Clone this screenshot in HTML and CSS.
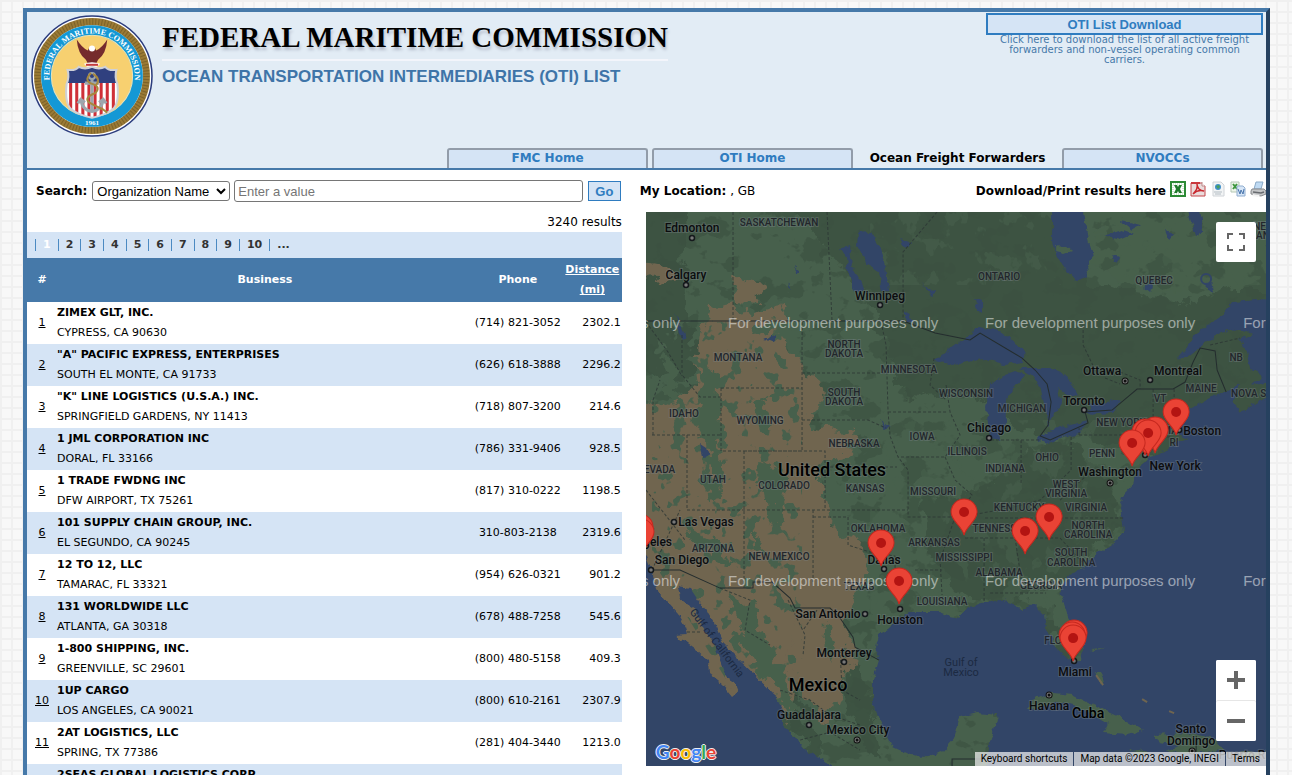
FILE: index.html
```html
<!DOCTYPE html>
<html lang="en">
<head>
    <meta charset="UTF-8">
    <meta name="viewport" content="width=device-width, initial-scale=1.0">
    <title>FMC - Ocean Transportation Intermediaries List</title>
    <link rel="stylesheet" href="styles.css">
</head>
<body>
    <div class="page">
        <header class="header">
            <div class="banner">
                <svg class="seal" viewBox="0 0 120 120" role="img" aria-label="Federal Maritime Commission seal">
                    <defs>
                        <path id="sealArc" d="M20 73 A42 42 0 1 1 100 73"/>
                        <clipPath id="shieldClip"><path d="M36 54 q8 1 11-3 q6 3 13 0 q7 3 13 0 q3 4 11 3 q-2 7 1 14 q2 20-5 25 q-8 6-20 8 q-12-2-20-8 q-7-5-5-25 q3-7 1-14z"/></clipPath>
                    </defs>
                    <circle cx="60" cy="60" r="59" fill="#fff" stroke="#2b3c7d" stroke-width="1.500"/>
                    <circle cx="60" cy="60" r="53.500" fill="none" stroke="#9a7a35" stroke-width="7"/>
                    <circle cx="60" cy="60" r="53.500" fill="none" stroke="#7d6229" stroke-width="6" stroke-dasharray="1 2"/>
                    <circle cx="60" cy="60" r="50" fill="#1498d5"/>
                    <circle cx="60" cy="60" r="40" fill="#f7d070" stroke="#e9e2b8"/>
                    <text class="seal-text ring"><textPath href="#sealArc" startOffset="50%" text-anchor="middle">FEDERAL MARITIME COMMISSION</textPath></text>
                    <text class="seal-text" x="60" y="108" text-anchor="middle">1961</text>
                    <path d="M45 24 q1 14 9 20 l2 4 h8 l2-4 q8-6 9-20 q-5 8-11 11 q-1-4-4-4 t-4 4 q-6-3-11-11z" fill="#752b2d"/>
                    <circle cx="60" cy="33" r="3" fill="#fff"/>
                    <path d="M52 48 q8-3 16 0 l-3 3 h-10z" fill="#fff"/>
                    <path d="M54 49h12" stroke="#c43c3c" stroke-width="2"/>
                    <g clip-path="url(#shieldClip)">
                        <path d="M34 50h52v54H34z" fill="#fff"/>
                        <path d="M39 67v36M45 67v36M51 67v36M57 67v36M63 67v36M69 67v36M75 67v36M81 67v36" stroke="#cf3038" stroke-width="3"/>
                        <path d="M34 50h52v17H34z" fill="#30407f"/>
                    </g>
                    <path d="M36 54 q8 1 11-3 q6 3 13 0 q7 3 13 0 q3 4 11 3 q-2 7 1 14 q2 20-5 25 q-8 6-20 8 q-12-2-20-8 q-7-5-5-25 q3-7 1-14z" fill="none" stroke="#cfd1d8" stroke-width="2"/>
                    <g fill="none" stroke="#9da6ad" stroke-width="3">
                        <circle cx="60" cy="60" r="3" stroke-width="2"/>
                        <path d="M60 63v31M53 67h14M49 84q2 10 11 11q9-1 11-11M46 87l3-4 4 3M67 86l4-3 3 4"/>
                    </g>
                    <path d="M59 57q-8 8 2 11q8 3 2 9q-11 4-6 9q7 4 14 7l4 3M61 58q8 5 3 11" fill="none" stroke="#a7883e" stroke-width="2"/>
                </svg>
                <div class="titles">
                    <h1>FEDERAL MARITIME COMMISSION</h1>
                    <h2>OCEAN TRANSPORTATION INTERMEDIARIES (OTI) LIST</h2>
                </div>
                <div class="download">
                    <button type="button" class="download-btn">OTI List Download</button>
                    <p>Click here to download the list of all active freight forwarders and non-vessel operating common carriers.</p>
                </div>
            </div>
            <nav class="tabs">
                <a href="#">FMC Home</a>
                <a href="#">OTI Home</a>
                <a href="#" class="active">Ocean Freight Forwarders</a>
                <a href="#">NVOCCs</a>
            </nav>
        </header>

        <main class="main">
            <section class="listing">
                <form class="search">
                    <label for="field">Search:</label>
                    <select id="field">
                        <option>Organization Name</option>
                        <option>City</option>
                        <option>State</option>
                    </select>
                    <input type="text" id="value" placeholder="Enter a value" aria-label="Enter a value">
                    <button type="button" class="go">Go</button>
                </form>
                <div class="count">3240 results</div>
                <nav class="pager">
                    <a href="#" class="current">1</a><a href="#">2</a><a href="#">3</a><a href="#">4</a><a href="#">5</a><a href="#">6</a><a href="#">7</a><a href="#">8</a><a href="#">9</a><a href="#">10</a><a href="#">...</a>
                </nav>
                <table class="results">
                    <thead>
                        <tr>
                            <th class="num">#</th>
                            <th>Business</th>
                            <th class="phone">Phone</th>
                            <th class="dist"><a href="#">Distance (mi)</a></th>
                        </tr>
                    </thead>
                    <tbody>
                        <tr><td class="num"><a href="#">1</a></td><td><b>ZIMEX GLT, INC.</b><br>CYPRESS, CA 90630</td><td class="phone">(714) 821-3052</td><td class="dist">2302.1</td></tr>
                        <tr><td class="num"><a href="#">2</a></td><td><b>"A" PACIFIC EXPRESS, ENTERPRISES</b><br>SOUTH EL MONTE, CA 91733</td><td class="phone">(626) 618-3888</td><td class="dist">2296.2</td></tr>
                        <tr><td class="num"><a href="#">3</a></td><td><b>"K" LINE LOGISTICS (U.S.A.) INC.</b><br>SPRINGFIELD GARDENS, NY 11413</td><td class="phone">(718) 807-3200</td><td class="dist">214.6</td></tr>
                        <tr><td class="num"><a href="#">4</a></td><td><b>1 JML CORPORATION INC</b><br>DORAL, FL 33166</td><td class="phone">(786) 331-9406</td><td class="dist">928.5</td></tr>
                        <tr><td class="num"><a href="#">5</a></td><td><b>1 TRADE FWDNG INC</b><br>DFW AIRPORT, TX 75261</td><td class="phone">(817) 310-0222</td><td class="dist">1198.5</td></tr>
                        <tr><td class="num"><a href="#">6</a></td><td><b>101 SUPPLY CHAIN GROUP, INC.</b><br>EL SEGUNDO, CA 90245</td><td class="phone">310-803-2138</td><td class="dist">2319.6</td></tr>
                        <tr><td class="num"><a href="#">7</a></td><td><b>12 TO 12, LLC</b><br>TAMARAC, FL 33321</td><td class="phone">(954) 626-0321</td><td class="dist">901.2</td></tr>
                        <tr><td class="num"><a href="#">8</a></td><td><b>131 WORLDWIDE LLC</b><br>ATLANTA, GA 30318</td><td class="phone">(678) 488-7258</td><td class="dist">545.6</td></tr>
                        <tr><td class="num"><a href="#">9</a></td><td><b>1-800 SHIPPING, INC.</b><br>GREENVILLE, SC 29601</td><td class="phone">(800) 480-5158</td><td class="dist">409.3</td></tr>
                        <tr><td class="num"><a href="#">10</a></td><td><b>1UP CARGO</b><br>LOS ANGELES, CA 90021</td><td class="phone">(800) 610-2161</td><td class="dist">2307.9</td></tr>
                        <tr><td class="num"><a href="#">11</a></td><td><b>2AT LOGISTICS, LLC</b><br>SPRING, TX 77386</td><td class="phone">(281) 404-3440</td><td class="dist">1213.0</td></tr>
                        <tr><td class="num"></td><td><b>2SEAS GLOBAL LOGISTICS CORP</b></td><td class="phone"></td><td class="dist"></td></tr>
                    </tbody>
                </table>
            </section>

            <section class="location">
                <div class="location-bar">
                    <div><b>My Location:</b> , GB</div>
                    <div class="exports">
                        <b>Download/Print results here</b>
                        <a href="#" aria-label="Excel"><svg viewBox="0 0 16 16"><path d="M1 1h14v14H1z" fill="#fff" stroke="#2c8a35" stroke-width="2"/><path d="M3 3h10v10H3z" fill="none" stroke="#a8d4a9" stroke-dasharray="1 1"/><path d="M4 4h3l1 2 1-2h3l-2 4 2 4H9l-1-2-1 2H4l2-4z" fill="#1f7a2b"/></svg></a>
                        <a href="#" aria-label="PDF"><svg viewBox="0 0 16 16"><path d="M1 2h11l3 3v10H1z" fill="#eadcdc" stroke="#c4474b"/><path d="M1 1h9v2H1z" fill="#c9383d"/><path d="M3 13c3-3 5-7 4-10 0 4 3 7 7 7-4-1-8 0-11 3z" fill="none" stroke="#c9282e" stroke-width="1.500"/><path d="M12 1v4h3" fill="#fff" stroke="#b88"/></svg></a>
                        <a href="#" aria-label="HTML"><svg viewBox="0 0 16 16"><path d="M3 1h8l3 3v11H3z" fill="#f2f4f5" stroke="#d0d4d8"/><circle cx="8" cy="6" r="3" fill="#3f8fc9"/><path d="M6 5l3-1 1 2-2 2z" fill="#4aa05a"/><path d="M4 11h8M5 13h6" stroke="#b3bcc3"/></svg></a>
                        <a href="#" aria-label="Word"><svg viewBox="0 0 16 16"><path d="M1 1h8v10H1z" fill="#eef6ea" stroke="#b4c7b6"/><path d="M3 3l4 5M7 3L3 8" stroke="#3d963e" stroke-width="2"/><path d="M7 5h6l2 2v8H7z" fill="#d7e6f7" stroke="#91aed0"/><path d="M8 8l2 5 1-4 2 4 1-5" fill="none" stroke="#4774ab"/></svg></a>
                        <a href="#" aria-label="Print"><svg viewBox="0 0 16 16"><path d="M6 1h7l-2 7H4z" fill="#bfdaf3" stroke="#8aaac8"/><path d="M2 8h12l2 2v3l-5 2-10-2v-3z" fill="#c3c5c7" stroke="#87898c"/><path d="M3 11l8 1 3-1" fill="none" stroke="#686b70" stroke-width="1.500"/><path d="M3 13l7 1-2 2-6-1z" fill="#f4f4f4"/></svg></a>
                    </div>
                </div>

                <div class="map">
                    <svg class="map-canvas" viewBox="646 212 620 554" preserveAspectRatio="xMidYMid slice" role="img" aria-label="Map of results">
                        <defs>
                            <filter id="rough" x="-5%" y="-5%" width="110%" height="110%">
                                <feTurbulence type="fractalNoise" baseFrequency="0.06" numOctaves="4" seed="4" result="n"/>
                                <feDisplacementMap in="SourceGraphic" in2="n" scale="26" xChannelSelector="R" yChannelSelector="G"/>
                            </filter>
                            <filter id="coast" x="-5%" y="-5%" width="110%" height="110%" color-interpolation-filters="sRGB">
                                <feTurbulence type="fractalNoise" baseFrequency="0.12" numOctaves="3" seed="9" result="n"/>
                                <feDisplacementMap in="SourceGraphic" in2="n" scale="7" xChannelSelector="R" yChannelSelector="G"/>
                            </filter>
                            <filter id="woods" x="0" y="0" width="100%" height="100%" color-interpolation-filters="sRGB">
                                <feTurbulence type="fractalNoise" baseFrequency="0.04 0.05" numOctaves="4" seed="12"/>
                                <feColorMatrix values="0 0 0 0 0.235  0 0 0 0 0.318  0 0 0 0 0.255  22 0 0 0 -12.4"/>
                                <feComposite in2="SourceGraphic" operator="in"/>
                            </filter>
                            <filter id="meadow" x="0" y="0" width="100%" height="100%" color-interpolation-filters="sRGB">
                                <feTurbulence type="fractalNoise" baseFrequency="0.05 0.04" numOctaves="4" seed="31"/>
                                <feColorMatrix values="0 0 0 0 0.278  0 0 0 0 0.376  0 0 0 0 0.298  0 22 0 0 -12.8"/>
                                <feComposite in2="SourceGraphic" operator="in"/>
                            </filter>
                            <filter id="steppe" x="0" y="0" width="100%" height="100%" color-interpolation-filters="sRGB">
                                <feTurbulence type="fractalNoise" baseFrequency="0.07" numOctaves="3" seed="22"/>
                                <feColorMatrix values="0 0 0 0 0.278  0 0 0 0 0.376  0 0 0 0 0.298  22 0 0 0 -13.2"/>
                                <feComposite in2="SourceGraphic" operator="in"/>
                            </filter>
                            <g id="pin">
                                <path d="M0 0C-2-9-13-14-13-23a13 13 0 1 1 26 0C13-14 2-9 0 0z" fill="#ea4335" stroke="#c5281f"/>
                                <circle cy="-23" r="5" fill="#b31412"/>
                            </g>
                            <circle id="dot" r="2.500" fill="#777" stroke="#15191c" stroke-width="1.500"/>
                            <g id="capital"><circle r="3" fill="#777" stroke="#111"/><circle r="1.500" fill="#111"/></g>
                        </defs>

                        <!-- land -->
                        <path d="M640 200h640v580H640z" fill="#47604c"/>
                        <g filter="url(#rough)" fill="#3d5342">
                            <path d="M630 190h55l4 40-6 30 8 50 10 40-14 32-22-8-35 6z"/>
                            <path d="M780 190h290l-10 60 40 40 90 10 80-20v130l-100 50-70-20-80-10-50-40-66 10-15-40-20-60-60-70z"/>
                            <path d="M920 500l60-10 50-40 50-5 30 30 10 50-50 50-60 30-50-10-30-40z"/>
                            <path d="M725 600l30 30 40 60 30 60-12 16-60-110-40-50zM850 655l20 40 8 60-20-10-14-50zM1050 605l20 45-5 12-24-40z"/>
                        </g>
                        <path d="M1098 205h172v85h-90l-60-6-20-20z" fill="#47604c" filter="url(#rough)"/>
                        <path d="M640 200h640v580H640z" fill="#000" filter="url(#woods)" opacity=".65"/>
                        <path d="M870 420h300v200H870zM870 205h400v80H870z" fill="#000" filter="url(#meadow)" opacity=".6"/>

                        <!-- dry areas -->
                        <g filter="url(#rough)" fill="#6f6550">
                            <path d="M733 275l32 8-5 20-24-2zM700 335l12-28 20-4 15 12 36-8 5 12-28 4-8 12 32-2 8 20 18 20 22 16-15 18-5 20 40 4 14 15-30 8-17 12v26l10 32 28 18 12 32-16 30-18 26-20 10-4 30-30 50-14 10-60-50-18-16-22-25-20-20-22-6-12-40V365l12 20 40 25 20-12 12-10-2-25z"/>
                            <path d="M640 260l20 2 12 18-15 4z"/>
                            <path d="M800 605l40 12 16 40-14 30-12 36-28-26-15-38z"/>
                            <path d="M675 580l10 30 30 45 18 30-14-2-45-55-24-46z"/>
                        </g>
                        <path d="M652 320h150v385h-60L652 560z" fill="#000" filter="url(#steppe)"/>
                        <g filter="url(#rough)" fill="#47604c">
                            <path d="M708 370l14 16-4 58 4 50-10 8-6-60-14-24z"/>
                            <path d="M756 460l18 4 14 20-6 40-14-8-6-30z"/>
                            <path d="M690 532l30 8 20 24-14-2-34-16zM752 530l10 8-2 22-8-10z"/>
                            <path d="M728 590l24 16 18 40 20 40 6 32-24-32-30-40zM822 626l14 18-6 20-10-16z"/>
                            <path d="M752 402l14-4 10 30-8 6zM660 350l16 20 6 40-12-16z"/>
                        </g>

                        <!-- oceans and lakes -->
                        <g filter="url(#coast)" fill="#324567">
                            <path d="M630 540L646 556 652 570 657 590 667 602 677 613 685 627 687 634 676 635 695 649 708 661 709 674 723 685 733 697 739 692 735 682 727 677 722 663 715 647 703 627 695 610 680 600 678 586 690 588 698 600 707 610 715 623 723 643 740 660 753 672 773 693 783 710 783 727 797 740 807 752 823 760 840 772H630z"/>
                            <path d="M983 780L988 747 993 733 998 715 977 713 960 717 954 738 942 752 927 756 910 755 893 747 888 737 878 720 873 703 873 680 879 660 875 647 878 635 887 630 900 617 913 612 940 612 950 616 960 618 968 607 987 603 1000 600 1010 603 1022 610 1035 605 1045 615 1047 630 1055 647 1070 661 1080 660 1083 650 1077 633 1068 617 1060 593 1068 575 1083 567 1100 552 1117 540 1124 532 1122 517 1119 506 1124 495 1133 485 1137 470 1147 458 1165 452 1174 443 1188 438 1178 434 1180 422 1188 410 1213 396 1227 392 1240 384 1233 402 1242 412 1267 397 1290 400V780z"/>
                            <path d="M1178 358L1200 330 1222 315 1233 302 1280 298V380L1250 386 1262 376 1250 368 1246 352 1240 340 1252 334 1238 328 1222 333 1205 342 1185 358z"/>
                            <path d="M1052 200V242L1056 256 1068 272 1076 281 1088 276 1087 266 1093 258 1088 235 1082 200z"/>
                            <path d="M934 361L948 350 966 337 980 327 1004 332 1014 344 1025 352 1023 361 1004 364 984 359 968 362 954 365z"/>
                            <path d="M990 384L1002 376 1016 371 1026 375 1014 388 1007 400 1005 424 1000 440 990 438 986 408z"/>
                            <path d="M1021 368L1050 368 1067 376 1079 397 1068 394 1057 388 1062 402 1055 415 1048 426 1045 410 1041 390 1034 377z"/>
                            <path d="M1037 438L1060 427 1089 421 1078 433 1062 438 1048 444zM1083 414L1094 404 1119 400 1114 412z"/>
                            <path d="M858 233L870 232 879 247 886 267 889 290 882 291 878 272 868 266 857 246zM840 248l10-2 2 22 12 20-8 4-8-20-2-14z"/>
                            <path d="M700 443l6 4 3 8-6 1z"/>
                            <path d="M1104 236l18-6 12 4-14 6zM1188 212l12-2 4 22-8 4zM974 299l8 2v14l-6-4zM904 310l12 14-10-2zM1144 287l10-9-4 14zM1120 221l20 4-8 5zM1112 255l8 2-4 5zM1204 285l7-3 2 12zM1165 231l9 3-5 6z"/>
                            <path d="M794 267l5 4-4 3zM788 282l3 8-4-4zM765 340l11-5-2 7zM922 284l15 9-4 3zM900 239l12 4-6 5zM675 313l12 26-5 0zM880 420l9 7-4 2z"/>
                        </g>
                        <circle cx="1206" cy="279" r="5" fill="none" stroke="#324567" stroke-width="2"/>

                        <!-- islands -->
                        <g filter="url(#coast)" fill="#47604c">
                            <path d="M1027 710L1032 700 1053 693 1073 695 1093 705 1120 717 1143 731 1127 735 1103 733 1108 723 1090 713 1076 707 1057 702 1040 707z"/>
                            <path d="M1153 735L1187 733 1215 738 1224 750 1190 753 1165 751 1181 746 1160 742zM1130 751l15-2 4 4-14 1zM1238 752l24 1v5h-22z"/>
                            <path d="M1095 671l6 14 4-1-4-13zM1091 649l12-1-8 3zM1056 245l10 1 6 5-8 3-8-2z"/>
                        </g>
                        <path d="M1096 675l7 10M1142 699l5 3M1169 711l5 2" stroke="#6f6550" stroke-width="2"/>

                        <!-- borders -->
                        <g fill="none" stroke="#2c3634" stroke-dasharray="3 2" opacity=".8">
                            <path d="M733 212V321M827 212L832 321M937 212L903 252V321M802 322V451M802 373H887M802 420H868L886 428M721 388H802V451H721zM683 376L700 397H721M652 435H721M653 435V400L660 380M682 335V376M646 322L668 352 682 376M687 435V510M687 510H908M744 451V588M744 451H825V510M825 467H897M813 510V582M813 517H848V545L870 552 895 556V595"/>
                            <path d="M881 322L886 345 888 412 890 436 898 457 908 470V517H955M888 412H948M946 385L950 412 960 435 945 457H898M945 457L955 480 972 495 955 517 940 560 942 595M915 570H942M991 440H1021V485M1021 440H1040M1071 437V470L1040 500 1010 508 965 516M1079 435H1143M1079 435V428M985 518H1123M965 538H1060M984 538V603M1015 538L1022 585M990 593H1046M1060 538L1082 562M1060 500L1090 472H1135M1153 389V420L1150 440M1174 389V425M1155 428H1178M1157 437H1172M1083 325V345L1096 372M934 358L930 385 946 400"/>
                            <path d="M652 570L680 510M646 490L685 540M720 588L750 600 745 630 770 645M788 600L805 635 803 655M817 610L803 630M840 650L842 690 860 700M780 690L810 700 830 715 860 725M687 632H702M800 740L830 732 860 750M1120 372L1140 380V389M1210 345L1240 338M1105 378L1120 384"/>
                        </g>
                        <path d="M646 321H903L935 333 970 340 980 333 1022 358 1035 370 1047 384 1051 402 1048 425 1040 436 1050 440 1088 423 1085 412 1112 410 1137 389 1173 389 1185 382 1193 362 1200 348 1215 351 1217 370 1226 392M651 570L680 570 720 588H753V582H772L790 598 795 608 830 608 840 618 853 637 855 647 879 660M952 766V759H983M1196 752V736" fill="none" stroke="#242d2e"/>

                        <!-- regions -->
                        <g class="region">
                            <text x="779" y="226">SASKATCHEWAN</text>
                            <text x="999" y="280">ONTARIO</text>
                            <text x="1154" y="284">QUEBEC</text>
                            <text x="1270" y="230">NEWFO</text>
                            <text x="1270" y="239">AND L</text>
                            <text x="738" y="361">MONTANA</text>
                            <text x="844" y="348">NORTH</text>
                            <text x="844" y="357">DAKOTA</text>
                            <text x="909" y="373">MINNESOTA</text>
                            <text x="844" y="396">SOUTH</text>
                            <text x="844" y="405">DAKOTA</text>
                            <text x="966" y="397">WISCONSIN</text>
                            <text x="1022" y="412">MICHIGAN</text>
                            <text x="684" y="417">IDAHO</text>
                            <text x="760" y="424">WYOMING</text>
                            <text x="922" y="440">IOWA</text>
                            <text x="854" y="447">NEBRASKA</text>
                            <text x="967" y="455">ILLINOIS</text>
                            <text x="1047" y="461">OHIO</text>
                            <text x="1005" y="472">INDIANA</text>
                            <text x="1102" y="457">PENN</text>
                            <text x="1121" y="426">NEW YORK</text>
                            <text x="1170" y="434">MA</text>
                            <text x="1174" y="446">RI</text>
                            <text x="1160" y="402">VT</text>
                            <text x="1201" y="392">MAINE</text>
                            <text x="1236" y="361">NB</text>
                            <text class="start" x="1231" y="397">NOVA SCOTIA</text>
                            <text x="656" y="473">NEVADA</text>
                            <text x="713" y="483">UTAH</text>
                            <text x="784" y="489">COLORADO</text>
                            <text x="865" y="492">KANSAS</text>
                            <text x="933" y="495">MISSOURI</text>
                            <text x="1066" y="488">WEST</text>
                            <text x="1066" y="497">VIRGINIA</text>
                            <text x="1019" y="511">KENTUCKY</text>
                            <text x="1086" y="511">VIRGINIA</text>
                            <text x="1000" y="532">TENNESSEE</text>
                            <text x="1088" y="529">NORTH</text>
                            <text x="1088" y="538">CAROLINA</text>
                            <text x="878" y="532">OKLAHOMA</text>
                            <text x="934" y="546">ARKANSAS</text>
                            <text x="713" y="552">ARIZONA</text>
                            <text x="779" y="560">NEW MEXICO</text>
                            <text x="964" y="561">MISSISSIPPI</text>
                            <text x="1071" y="556">SOUTH</text>
                            <text x="1071" y="566">CAROLINA</text>
                            <text x="999" y="576">ALABAMA</text>
                            <text x="1041" y="589">GEORGIA</text>
                            <text x="859" y="590">TEXAS</text>
                            <text x="942" y="605">LOUISIANA</text>
                            <text x="1064" y="644">FLORIDA</text>
                        </g>
                        <g class="water">
                            <text x="961" y="666">Gulf of</text>
                            <text x="961" y="676">Mexico</text>
                            <text transform="translate(714 645) rotate(53)">Gulf of California</text>
                        </g>
                        <g class="city">
                            <text x="692" y="232">Edmonton</text>
                            <text x="686" y="279">Calgary</text>
                            <text x="880" y="300">Winnipeg</text>
                            <text x="1102" y="375">Ottawa</text>
                            <text x="1178" y="375">Montreal</text>
                            <text x="1084" y="405">Toronto</text>
                            <text x="989" y="432">Chicago</text>
                            <text x="1202" y="435">Boston</text>
                            <text x="1175" y="470">New York</text>
                            <text x="1110" y="476">Washington</text>
                            <text x="706" y="526">Las Vegas</text>
                            <text class="end" x="672" y="546">Los Angeles</text>
                            <text x="682" y="564">San Diego</text>
                            <text x="884" y="564">Dallas</text>
                            <text x="828" y="618">San Antonio</text>
                            <text x="900" y="624">Houston</text>
                            <text x="844" y="657">Monterrey</text>
                            <text x="1075" y="676">Miami</text>
                            <text x="1049" y="710">Havana</text>
                            <text x="809" y="719">Guadalajara</text>
                            <text x="858" y="734">Mexico City</text>
                            <text x="1191" y="733">Santo</text>
                            <text x="1191" y="745">Domingo</text>
                            <text x="1250" y="759">Puerto Rico</text>
                        </g>
                        <g class="country">
                            <text x="832" y="476">United States</text>
                            <text x="818" y="691">Mexico</text>
                            <text class="small" x="1088" y="718">Cuba</text>
                        </g>
                        <use href="#dot" x="692" y="238"/><use href="#dot" x="686" y="285"/><use href="#dot" x="880" y="305"/>
                        <use href="#dot" x="1150" y="380"/><use href="#dot" x="1084" y="410"/><use href="#dot" x="989" y="438"/>
                        <use href="#dot" x="1145" y="455"/><use href="#dot" x="1179" y="430"/><use href="#dot" x="674" y="522"/><use href="#dot" x="651" y="570"/>
                        <use href="#dot" x="884" y="569"/><use href="#dot" x="865" y="614"/><use href="#dot" x="900" y="609"/>
                        <use href="#dot" x="844" y="662"/><use href="#dot" x="1074" y="661"/><use href="#dot" x="809" y="725"/>
                        <use href="#capital" x="1125" y="381"/><use href="#capital" x="1110" y="483"/><use href="#capital" x="1049" y="695"/>
                        <use href="#capital" x="857" y="740"/><use href="#capital" x="1192" y="751"/>

                        <g class="watermark">
                            <text x="470" y="328">For development purposes only</text>
                            <text x="728" y="328">For development purposes only</text>
                            <text x="985" y="328">For development purposes only</text>
                            <text x="1243" y="328">For development purposes only</text>
                            <text x="470" y="586">For development purposes only</text>
                            <text x="728" y="586">For development purposes only</text>
                            <text x="985" y="586">For development purposes only</text>
                            <text x="1243" y="586">For development purposes only</text>
                        </g>

                        <use href="#pin" x="1176" y="435"/><use href="#pin" x="1155" y="453"/><use href="#pin" x="1145" y="455"/>
                        <use href="#pin" x="1148" y="456"/><use href="#pin" x="1132" y="466"/><use href="#pin" x="964" y="535"/>
                        <use href="#pin" x="1049" y="540"/><use href="#pin" x="1025" y="554"/><use href="#pin" x="881" y="566"/>
                        <use href="#pin" x="899" y="604"/><use href="#pin" x="1074" y="656"/><use href="#pin" x="1072" y="658"/>
                        <use href="#pin" x="1073" y="661"/><use href="#pin" x="640" y="550"/><use href="#pin" x="641" y="555"/>
                    </svg>

                    <button type="button" class="map-btn fullscreen" aria-label="Toggle fullscreen view">
                        <svg viewBox="0 0 18 18"><path d="M1 6V1h5M12 1h5v5M17 12v5h-5M6 17H1v-5" fill="none" stroke="#666" stroke-width="2"/></svg>
                    </button>
                    <div class="zoom">
                        <button type="button" class="map-btn" aria-label="Zoom in"><svg viewBox="0 0 18 18"><path d="M9 0v18M0 9h18" stroke="#666" stroke-width="4"/></svg></button>
                        <button type="button" class="map-btn" aria-label="Zoom out"><svg viewBox="0 0 18 18"><path d="M0 9h18" stroke="#666" stroke-width="4"/></svg></button>
                    </div>
                    <a href="#" class="google" aria-label="Google"><span class="g-blue">G</span><span class="g-red">o</span><span class="g-yellow">o</span><span class="g-blue">g</span><span class="g-green">l</span><span class="g-red">e</span></a>
                    <div class="credits">
                        <button type="button">Keyboard shortcuts</button>
                        <span>Map data ©2023 Google, INEGI</span>
                        <a href="#">Terms</a>
                    </div>
                </div>
            </section>
        </main>
    </div>
</body>
</html>
```
FILE: styles.css
```css
* {
    box-sizing: border-box;
}
body {
    margin: 8px 22px 0 23px;
    background-color: #f8f8f8;
    background-image: linear-gradient(#f0f0f0 2px, transparent 2px), linear-gradient(90deg, #f0f0f0 2px, transparent 2px);
    background-size: 11px 11px;
    font-family: Verdana, "DejaVu Sans", sans-serif;
    font-size: 12px;
    color: #000;
}
.page {
    border: 4px solid #4679a9;
    border-right-color: #26415f;
    background: #fff;
}

/* Header */
.header {
    background: #e2ecf5;
    border-bottom: 2px solid #4679a9;
}
.banner {
    display: flex;
    min-height: 136px;
    padding: 1px 3px 0 4px;
}
.seal {
    flex: none;
    width: 122px;
    height: 122px;
    margin-top: 2px;
}
.seal-text {
    font: bold 7px "Liberation Serif", serif;
    fill: #fff;
}
.seal-text.ring {
    font-size: 8px;
}
.titles {
    flex: 1;
    padding: 8px 0 0 9px;
}
.titles h1 {
    width: fit-content;
    margin: 0;
    padding-bottom: 6px;
    border-bottom: 2px solid #f3f5fb;
    font: bold 29px/32px "Liberation Serif", serif;
    text-shadow: 1px 3px 3px #b4bccb;
}
.titles h2 {
    margin: 6px 0 0;
    font: bold 17px/20px "Liberation Sans", Arial, sans-serif;
    color: #3e74a8;
}
.download {
    width: 277px;
    text-align: center;
}
.download-btn {
    width: 100%;
    height: 22px;
    padding: 0;
    border: 2px solid #2f7cc0;
    background: #d5e4f5;
    color: #2f7cc0;
    font: bold 13px "Liberation Sans", Arial, sans-serif;
}
.download p {
    margin: 0 8px;
    font-size: 10px;
    line-height: 10px;
    color: #4679a9;
}
.tabs {
    display: flex;
    justify-content: flex-end;
    gap: 4px;
    padding-right: 3px;
}
.tabs a {
    width: 201px;
    height: 20px;
    border: 2px solid #929ca9;
    border-bottom: 0;
    border-radius: 3px 3px 0 0;
    background: #d5e4f5;
    color: #2f7cc0;
    font-weight: bold;
    line-height: 17px;
    text-align: center;
    text-decoration: none;
}
.tabs a.active {
    border-color: transparent;
    background: none;
    color: #000;
}

/* Two columns */
.main {
    display: grid;
    grid-template-columns: 19fr 20fr;
    column-gap: 18px;
}
.search {
    display: flex;
    align-items: center;
    height: 42px;
    padding-left: 9px;
}
.search label {
    margin-right: 5px;
    font-weight: bold;
}
.search select, .search input, .search button {
    font: 13px "Liberation Sans", Arial, sans-serif;
}
.search select {
    width: 138px;
    height: 20px;
    margin-right: 4px;
    padding: 0;
    border: 1px solid #767676;
    border-radius: 3px;
    background: #fff;
    color: #000;
}
.search input {
    flex: 1;
    min-width: 0;
    height: 22px;
    margin-right: 5px;
    padding: 0 3px;
    border: 1px solid #767676;
    border-radius: 3px;
}
.search .go {
    width: 33px;
    height: 20px;
    margin-right: 1px;
    padding: 0;
    border: 1px solid #2f7cc0;
    background: #d5e4f5;
    color: #2f7cc0;
    font-weight: bold;
}
.count {
    height: 20px;
    line-height: 20px;
    text-align: right;
}
.pager {
    display: flex;
    align-items: center;
    height: 26px;
    padding-left: 8px;
    background: #d5e4f5;
    font-size: 11px;
    font-weight: bold;
}
.pager a {
    padding: 0 7px;
    border-left: 1px solid #4b8ac2;
    color: #333;
    line-height: 12px;
    text-decoration: none;
}
.pager a.current {
    color: #fff;
}
.results {
    width: 100%;
    border-collapse: collapse;
    font-size: 11px;
    line-height: 20px;
}
.results th {
    height: 44px;
    padding: 0 1px;
    background: #4679a9;
    color: #fff;
}
.results td {
    height: 42px;
    padding: 1px 0;
    vertical-align: top;
}
.results tbody tr:nth-child(even) {
    background: #d5e4f5;
}
.results a {
    color: inherit;
}
.results .num {
    width: 30px;
    text-align: center;
    vertical-align: middle;
}
.results .phone {
    width: 90px;
    text-align: center;
    vertical-align: middle;
}
.results .dist {
    width: 59px;
    text-align: center;
    vertical-align: middle;
}
.results td.dist {
    padding-right: 1px;
    text-align: right;
}

/* Location and map */
.location-bar {
    display: flex;
    justify-content: space-between;
    align-items: center;
    height: 42px;
}
.exports {
    display: flex;
    align-items: center;
    gap: 4px;
}
.exports a {
    width: 16px;
    height: 20px;
}
.exports svg {
    width: 16px;
    height: 16px;
}
.map {
    position: relative;
    margin-left: 6px;
    overflow: hidden;
}
.map-canvas {
    display: block;
    width: 100%;
    font-family: Roboto, sans-serif;
}
.region text, .water text, .city text, .country text {
    text-anchor: middle;
}
.region .start {
    text-anchor: start;
}
.city .end {
    text-anchor: end;
}
.region text, .city text, .country text {
    paint-order: stroke;
    stroke: rgba(125, 135, 140, 0.35);
    stroke-width: 2px;
}
.region {
    font-size: 10px;
    font-weight: 500;
    fill: #22262b;
}
.water {
    font-size: 11px;
    fill: #1c2a42;
}
.city {
    font-size: 12px;
    font-weight: 500;
    fill: #0b0c0e;
}
.country {
    font-size: 18px;
    font-weight: 500;
    fill: #000;
}
.country .small {
    font-size: 14px;
}
.watermark {
    font: 15px "Liberation Sans", Arial, sans-serif;
    fill: rgba(255, 255, 255, 0.5);
}
.map-btn {
    display: flex;
    align-items: center;
    justify-content: center;
    width: 40px;
    height: 40px;
    padding: 0;
    border: 0;
    border-radius: 2px;
    background: #fff;
}
.map-btn svg {
    width: 18px;
    height: 18px;
}
.fullscreen {
    position: absolute;
    top: 10px;
    right: 10px;
}
.zoom {
    position: absolute;
    right: 10px;
    bottom: 25px;
    border-radius: 2px;
    background: #fff;
}
.zoom .map-btn + .map-btn {
    margin-top: 1px;
    box-shadow: 0 -1px #e6e6e6;
}
.google {
    position: absolute;
    left: 10px;
    bottom: 1px;
    font: bold 19px/26px Lato, sans-serif;
    text-decoration: none;
    text-shadow: 1px 0 #eee, -1px 0 #eee, 0 1px #eee, 0 -1px #eee;
}
.g-blue { color: #4285f4; }
.g-red { color: #ea4335; }
.g-yellow { color: #fbbc04; }
.g-green { color: #34a853; }
.credits {
    position: absolute;
    right: 0;
    bottom: 0;
    display: flex;
    gap: 1px;
    font: 10px/14px Roboto, sans-serif;
}
.credits > * {
    height: 14px;
    padding: 0 6px;
    border: 0;
    background: rgba(245, 245, 245, 0.7);
    color: #000;
    font: inherit;
    text-decoration: none;
}
```
